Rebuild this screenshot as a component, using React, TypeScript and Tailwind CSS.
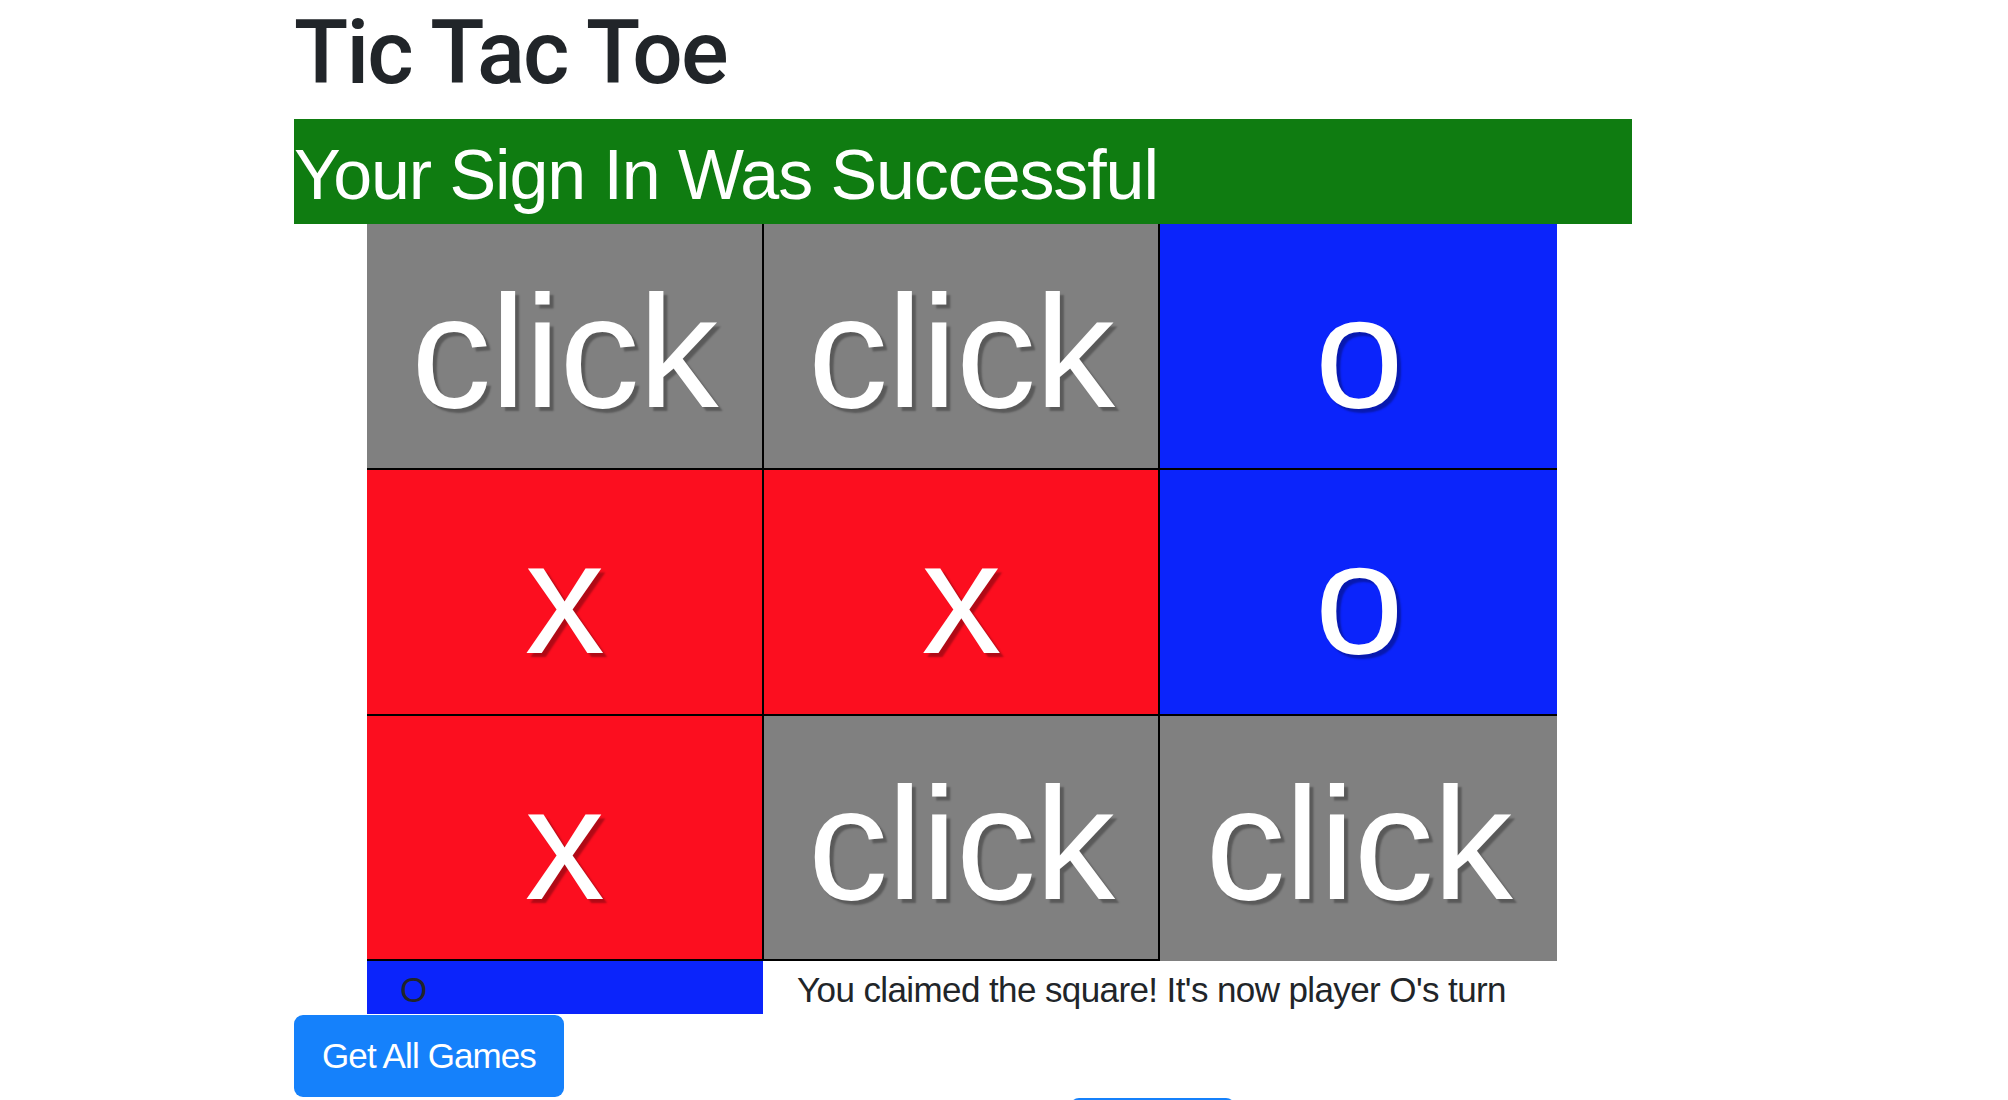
const board: string[] = ["click", "click", "o", "x", "x", "o", "x", "click", "click"];

const cellBg = (v: string) => {
  if (v === "x") return "bg-[#fc0e1f]";
  if (v === "o") return "bg-[#0b24fb]";
  return "bg-[#808080]";
};

const Cell = ({ value, index }: { value: string; index: number }) => {
  const col = index % 3;
  return (
    <div
      className={`${cellBg(value)} ${col < 2 ? "border-r-2" : ""} ${
        index !== 8 ? "border-b-2" : ""
      } border-black text-center text-white text-[160px] leading-[160px] pt-[48px] tracking-[-1px] [text-shadow:4px_4px_2px_rgba(0,0,0,0.3)]`}
    >
      {value}
    </div>
  );
};

export default function App() {
  return (
    <div className="h-[1100px] overflow-hidden bg-white text-[#212529] font-['Liberation_Sans',Arial,sans-serif]">
      <div className="ml-[294px] w-[1338px]">
        <h1 className="font-['Roboto',sans-serif] font-medium text-[89px] leading-[1.2] tracking-[-1.8px] mb-[12px]">
          Tic Tac Toe
        </h1>

        <div className="h-[105px] bg-[#0f7c11] pt-[14px]">
          <h2 className="text-white text-[70px] leading-[84px] tracking-[-1.1px]">
            Your Sign In Was Successful
          </h2>
        </div>

        <div className="ml-[73px] w-[1190px]">
          <div className="grid grid-cols-3 grid-rows-[246px_246px_245px]">
            {board.map((v, i) => (
              <Cell key={i} value={v} index={i} />
            ))}
          </div>

          <div className="flex h-[53px]">
            <div className="w-[396px] bg-[#0b24fb] pl-[33px] pt-[2px] text-[35px] leading-[53px]">O</div>
            <div className="pl-[34px] pt-[2px] text-[35px] leading-[53px] tracking-[-0.6px]">
              You claimed the square! It's now player O's turn
            </div>
          </div>
        </div>

        <button className="mt-[1px] h-[82px] px-[28px] rounded-[9px] bg-[#1581fb] text-white text-[35px] tracking-[-0.9px]">
          Get All Games
        </button>

        <div className="mt-[1px] ml-[776px] w-[165px] h-[60px] rounded-[9px] bg-[#1581fb]" />
      </div>
    </div>
  );
}
